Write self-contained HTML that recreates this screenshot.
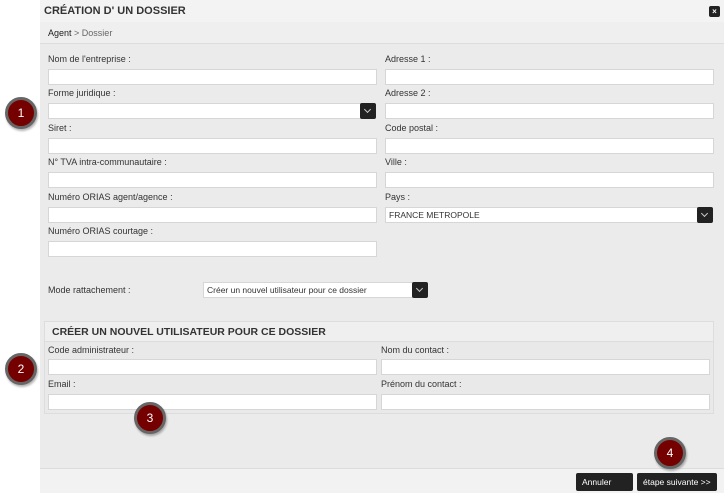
<!DOCTYPE html><html><head><meta charset="utf-8"><style>
*{box-sizing:border-box;margin:0;padding:0}
body{width:724px;height:493px;background:#fff;font-family:"Liberation Sans",sans-serif;font-size:9px;color:#333;position:relative;overflow:hidden}
.dlg{position:absolute;left:40px;top:0;width:684px;height:493px;background:#ebebeb}
.hd{position:absolute;left:0;top:0;width:684px;height:22px;background:#f3f3f3;font-weight:bold;font-size:11px;padding:5px 4px;color:#333}
.bc{position:absolute;left:0;top:22px;width:684px;height:22px;background:#efefef;border-bottom:1px solid #ddd;padding:6px 8px;font-size:9px}
.x{position:absolute;right:4px;top:6px;width:11px;height:11px;background:#222;border-radius:2px;color:#fff;font-size:8px;text-align:center;line-height:11px;font-weight:bold}
.l{position:absolute;font-size:9px;color:#333}
.i{position:absolute;height:16px;background:#fff;border:1px solid #d6d6d6}
.s{position:absolute;width:16px;height:16px;background:#222;border-radius:2px}
.s:after{content:"";position:absolute;left:5px;top:4px;width:4px;height:4px;border-right:1px solid #ccc;border-bottom:1px solid #ccc;transform:rotate(45deg)}
.sec{position:absolute;left:4px;top:321px;width:670px;height:93px;border:1px solid #ddd;background:#e9e9e9}
.sh{height:20px;background:#efefef;border-bottom:1px solid #ddd;font-weight:bold;font-size:10.5px;padding:4px 7px}
.ft{position:absolute;left:0;top:468px;width:684px;height:25px;background:#f2f2f2;border-top:1px solid #ddd}
.b{position:absolute;top:4px;height:18px;background:#222;color:#fff;font-size:8.5px;padding:4px 6px;border-radius:2px}
.c{position:absolute;width:32px;height:32px;border-radius:50%;background:#750000;border:3px solid #666;color:#fff;font-size:12px;text-align:center;line-height:26px;box-shadow:1px 2px 2px rgba(0,0,0,.3)}
</style></head><body>
<div class="dlg">
<div class="hd">CRÉATION D' UN DOSSIER</div><div class="x">×</div>
<div class="bc"><b style="font-weight:normal;color:#222">Agent</b> <span style="color:#666">&gt; Dossier</span></div>
<div class="l" style="left:8px;top:54px">Nom de l'entreprise :</div><div class="i" style="left:8px;top:69px;width:329px"></div>
<div class="l" style="left:8px;top:88px">Forme juridique :</div><div class="i" style="left:8px;top:103px;width:313px"></div><div class="s" style="left:320px;top:103px"></div>
<div class="l" style="left:8px;top:123px">Siret :</div><div class="i" style="left:8px;top:138px;width:329px"></div>
<div class="l" style="left:8px;top:157px">N° TVA intra-communautaire :</div><div class="i" style="left:8px;top:172px;width:329px"></div>
<div class="l" style="left:8px;top:192px">Numéro ORIAS agent/agence :</div><div class="i" style="left:8px;top:207px;width:329px"></div>
<div class="l" style="left:8px;top:226px">Numéro ORIAS courtage :</div><div class="i" style="left:8px;top:241px;width:329px"></div>
<div class="l" style="left:345px;top:54px">Adresse 1 :</div><div class="i" style="left:345px;top:69px;width:329px"></div>
<div class="l" style="left:345px;top:88px">Adresse 2 :</div><div class="i" style="left:345px;top:103px;width:329px"></div>
<div class="l" style="left:345px;top:123px">Code postal :</div><div class="i" style="left:345px;top:138px;width:329px"></div>
<div class="l" style="left:345px;top:157px">Ville :</div><div class="i" style="left:345px;top:172px;width:329px"></div>
<div class="l" style="left:345px;top:192px">Pays :</div><div class="i" style="left:345px;top:207px;width:313px;padding:2px 3px;font-size:8.5px">FRANCE METROPOLE</div><div class="s" style="left:657px;top:207px"></div>
<div class="l" style="left:8px;top:285px">Mode rattachement :</div><div class="i" style="left:163px;top:282px;width:210px;padding:2px 3px;font-size:8.5px">Créer un nouvel utilisateur pour ce dossier</div><div class="s" style="left:372px;top:282px"></div>
<div class="sec"><div class="sh">CRÉER UN NOUVEL UTILISATEUR POUR CE DOSSIER</div></div>
<div class="l" style="left:8px;top:345px">Code administrateur :</div><div class="i" style="left:8px;top:359px;width:329px"></div>
<div class="l" style="left:8px;top:379px">Email :</div><div class="i" style="left:8px;top:394px;width:329px"></div>
<div class="l" style="left:341px;top:345px">Nom du contact :</div><div class="i" style="left:341px;top:359px;width:329px"></div>
<div class="l" style="left:341px;top:379px">Prénom du contact :</div><div class="i" style="left:341px;top:394px;width:329px"></div>
<div class="ft"><div class="b" style="left:536px;width:57px">Annuler</div><div class="b" style="left:597px;width:80px">étape suivante &gt;&gt;</div></div>
</div>
<div class="c" style="left:5px;top:97px">1</div>
<div class="c" style="left:5px;top:353px">2</div>
<div class="c" style="left:134px;top:402px">3</div>
<div class="c" style="left:654px;top:437px">4</div>
</body></html>
